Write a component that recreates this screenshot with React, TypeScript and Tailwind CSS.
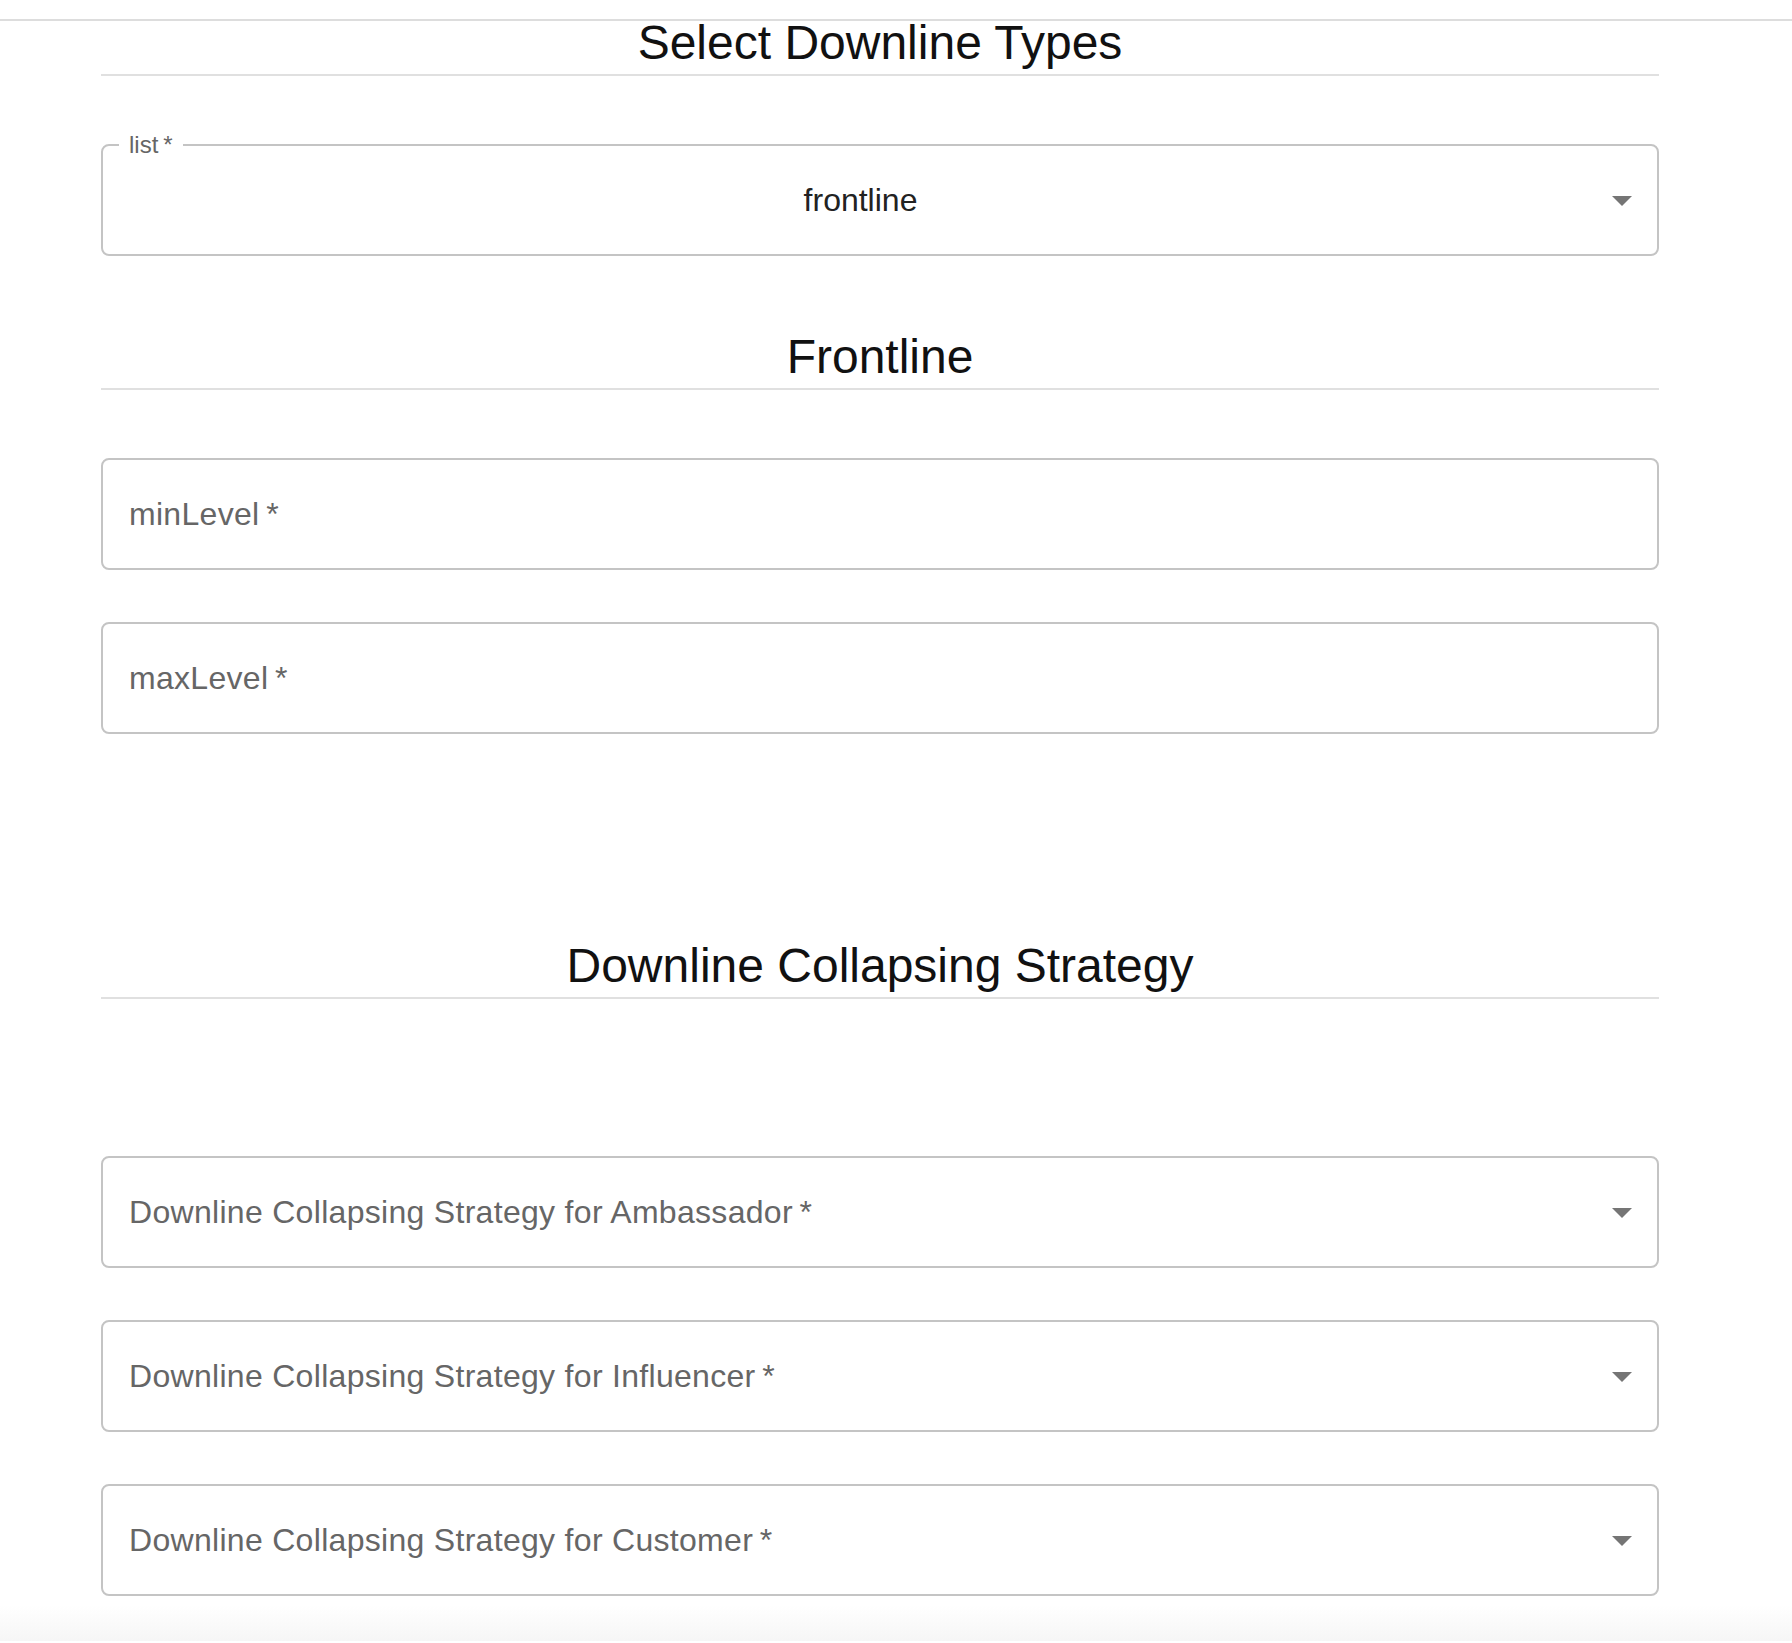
import React from 'react';

// MUI-like dropdown caret, drawn at 2x scale
const DropArrow = () => (
    <svg width="48" height="48" viewBox="0 0 24 24" className="shrink-0">
        <path d="M7 10l5 5 5-5z" fill="#757575" />
    </svg>
);

const SectionTitle = ({ children, className = '' }: { children: React.ReactNode; className?: string }) => (
    <div className={className}>
        <h2 className="pt-[2px] text-center text-[48px] leading-[40px] text-[#111111] font-normal">{children}</h2>
        <div className="mt-[11px] h-[2px] bg-[#e0e0e0]" />
    </div>
);

type FieldProps = {
    label: string;
    select?: boolean;
    className?: string;
};

// empty outlined field, the label sits inside as placeholder
const OutlinedField = ({ label, select, className = '' }: FieldProps) => (
    <div className={`h-[112px] border-2 border-[#c4c4c4] rounded-[8px] flex items-center pl-[26px] pr-[11px] ${className}`}>
        <span className="flex-1 text-[32px] leading-[32px] tracking-[0.3px] text-[#666666]">
            {label}
            {'\u2009*'}
        </span>
        {select && <DropArrow />}
    </div>
);

export default function App() {
    return (
        <div className="min-h-[1643px] bg-white font-['Liberation_Sans',Arial,sans-serif]">
            <div className="h-[19px]" />
            <div className="h-[2px] bg-[#dddddd]" />

            <div className="ml-[101px] w-[1558px]">
                <SectionTitle>Select Downline Types</SectionTitle>

                {/* filled select with floating label */}
                <div className="relative mt-[68px] h-[112px] border-2 border-[#c4c4c4] rounded-[8px] flex items-center pl-[26px] pr-[11px]">
                    <span className="absolute left-[16px] -top-[13px] px-[10px] bg-white text-[24px] leading-[24px] text-[#666666]">
                        list{'\u2009*'}
                    </span>
                    <span className="flex-1 pr-[6px] text-center text-[32px] leading-[32px] text-[#222222]">frontline</span>
                    <DropArrow />
                </div>

                <SectionTitle className="mt-[79px]">Frontline</SectionTitle>

                <OutlinedField label="minLevel" className="mt-[68px]" />
                <OutlinedField label="maxLevel" className="mt-[52px]" />

                <SectionTitle className="mt-[210px]">Downline Collapsing Strategy</SectionTitle>

                <OutlinedField label="Downline Collapsing Strategy for Ambassador" select className="mt-[157px]" />
                <OutlinedField label="Downline Collapsing Strategy for Influencer" select className="mt-[52px]" />
                <OutlinedField label="Downline Collapsing Strategy for Customer" select className="mt-[52px]" />
            </div>

            <div className="mt-[9px] h-[36px] bg-gradient-to-b from-white to-[#f6f6f6]" />
        </div>
    );
}
